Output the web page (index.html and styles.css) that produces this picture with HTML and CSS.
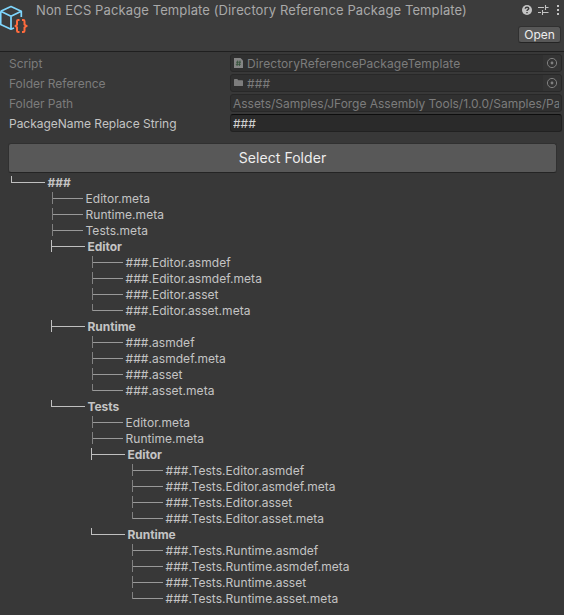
FILE: index.html
```html
<!DOCTYPE html>
<html lang="en">
<head>
<meta charset="utf-8">
<title>Inspector</title>
<link rel="stylesheet" href="styles.css">
</head>
<body>
<header class="header">
  <svg class="asset-icon" width="30" height="36" viewBox="0 0 30 36" fill="none">
    <path d="M0.7 11.3 11 6.6 21.3 11.3V17M0.7 11.3V24.5L11 29.2 14 28M0.7 11.3 11 16.3 21.3 11.3M11 16.3V29" stroke="#7fd6fd" stroke-width="1.7" stroke-linejoin="round"/>
    <path d="M19.5 20H18.2Q17 20 17 21.2V24.6L15.6 26 17 27.4V30.8Q17 32 18.2 32H19.5M22 20H23.3Q24.5 20 24.5 21.2V24.6L26.4 26 24.5 27.4V30.8Q24.5 32 23.3 32H22" stroke="#ff6b3d" stroke-width="2"/>
  </svg>
  <h1 class="title">Non ECS Package Template (Directory Reference Package Template)</h1>
  <div class="actions">
    <div class="tools">
      <svg width="10" height="10" viewBox="0 0 10 10"><circle cx="5" cy="5" r="5" fill="#c4c4c4"/><path d="M3.2 3.8Q3.3 2.2 5 2.2T6.8 3.6Q6.8 4.4 5.7 4.9 5 5.2 5 6.1M5 7V8.3" fill="none" stroke="#3c3c3c" stroke-width="1.4"/></svg>
      <svg width="11" height="10" viewBox="0 0 11 10" fill="none" stroke="#c4c4c4" stroke-width="1.1"><path d="M0 2.5H6M7.5 2.5H10.5M7.5 0V5M0 7.5H3M4.5 7.5H10.5M4.5 5V10"/></svg>
      <svg width="4" height="10" viewBox="0 0 4 10" fill="#c4c4c4"><path d="M1 0h2v2H1zM1 4h2v2H1zM1 8h2v2H1z"/></svg>
    </div>
    <button class="open">Open</button>
  </div>
</header>
<main>
  <section class="fields">
    <div class="row disabled"><label>Script</label><div class="field">
      <svg class="kind" width="9" height="10" viewBox="0 0 9 10"><path d="M0 0H6.5L9 2.5V10H0z" fill="#858585"/><path d="M3.7 2.5 3 8M6 2.5 5.3 8M2 4.2H7M1.8 6.3H6.8" stroke="#35523b" stroke-width=".9"/></svg>
      <span class="value object">DirectoryReferencePackageTemplate</span>
      <span class="picker"><svg width="12" height="12" viewBox="0 0 12 12"><circle cx="6" cy="6" r="4.6" fill="none" stroke="#808080"/><circle cx="6" cy="6" r="1.4" fill="#808080"/></svg></span></div></div>
    <div class="row disabled"><label>Folder Reference</label><div class="field">
      <svg class="kind" width="9" height="10" viewBox="0 0 9 10"><path d="M0 1.7Q0 1 .7 1H3.3L4.3 2.2H8.3Q9 2.2 9 2.9V7.4Q9 8.1 8.3 8.1H.7Q0 8.1 0 7.4z" fill="#7d7d7d"/></svg>
      <span class="value object">###</span>
      <span class="picker"><svg width="12" height="12" viewBox="0 0 12 12"><circle cx="6" cy="6" r="4.6" fill="none" stroke="#808080"/><circle cx="6" cy="6" r="1.4" fill="#808080"/></svg></span></div></div>
    <div class="row disabled"><label>Folder Path</label><div class="field text"><span class="value">Assets/Samples/JForge Assembly Tools/1.0.0/Samples/Pa</span></div></div>
    <div class="row"><label>PackageName Replace String</label><div class="field text active"><span class="value">###</span></div></div>
  </section>
  <button class="select">Select Folder</button>
  <ul class="tree">
    <li><div class="dir last">###</div>
      <ul>
        <li class="file">Editor.meta</li>
        <li class="file">Runtime.meta</li>
        <li class="file">Tests.meta</li>
        <li><div class="dir">Editor</div>
          <ul>
            <li class="file">###.Editor.asmdef</li>
            <li class="file">###.Editor.asmdef.meta</li>
            <li class="file">###.Editor.asset</li>
            <li class="file last">###.Editor.asset.meta</li>
          </ul>
        </li>
        <li><div class="dir">Runtime</div>
          <ul>
            <li class="file">###.asmdef</li>
            <li class="file">###.asmdef.meta</li>
            <li class="file">###.asset</li>
            <li class="file last">###.asset.meta</li>
          </ul>
        </li>
        <li><div class="dir last">Tests</div>
          <ul>
            <li class="file">Editor.meta</li>
            <li class="file">Runtime.meta</li>
            <li><div class="dir">Editor</div>
              <ul>
                <li class="file">###.Tests.Editor.asmdef</li>
                <li class="file">###.Tests.Editor.asmdef.meta</li>
                <li class="file">###.Tests.Editor.asset</li>
                <li class="file last">###.Tests.Editor.asset.meta</li>
              </ul>
            </li>
            <li><div class="dir last">Runtime</div>
              <ul>
                <li class="file">###.Tests.Runtime.asmdef</li>
                <li class="file">###.Tests.Runtime.asmdef.meta</li>
                <li class="file">###.Tests.Runtime.asset</li>
                <li class="file last">###.Tests.Runtime.asset.meta</li>
              </ul>
            </li>
          </ul>
        </li>
      </ul>
    </li>
  </ul>
</main>
</body>
</html>
```

FILE: styles.css
```css
* { box-sizing: border-box; }
body {
  margin: 0;
  height: 615px;
  overflow: hidden;
  background: #383838;
  color: #c4c4c4;
  font: 12px/16px Inter, "Liberation Sans", sans-serif;
  letter-spacing: -.02px;
}
button { font: inherit; letter-spacing: inherit; color: #eee; padding: 0; }
.header {
  display: flex;
  height: 52px;
  background: #3c3c3c;
  border-bottom: 1px solid #1f1f1f;
}
.asset-icon { flex: none; }
.title {
  flex: 1;
  margin: 0;
  padding: 2px 0 0 6px;
  font-size: 13px;
  line-height: 17px;
  font-weight: 400;
  letter-spacing: .11px;
  white-space: nowrap;
  color: #a9a9a9;
}
.actions {
  display: flex;
  flex-direction: column;
  align-items: flex-end;
  padding: 5px 4px 0 0;
  gap: 11px;
}
.tools { display: flex; gap: 6px; height: 10px; }
.tools svg:nth-child(2) { margin-right: 1px; }
.open {
  width: 43px;
  height: 17px;
  margin-right: -1px;
  background: #585858;
  border: 1px solid #303030;
  border-bottom-color: #242424;
  border-radius: 3px;
  line-height: 14px;
}
.fields {
  display: flex;
  flex-direction: column;
  gap: 2px;
  padding: 2px 2px 0 9px;
}
.row { display: flex; height: 18px; }
.row label { width: 221px; line-height: 19px; }
.disabled { color: #7c7c7c; }
.field {
  display: flex;
  align-items: center;
  width: 332px;
  min-width: 0;
  background: #303030;
  border: 1px solid #282828;
  border-radius: 3px;
  padding-left: 3px;
  overflow: hidden;
}
.kind { flex: none; margin-right: 4px; }
.value { flex: 1; white-space: nowrap; overflow: hidden; line-height: 16px; padding-top: 1px; }
.object { letter-spacing: .09px; }
.text { padding: 0 2px; }
.active { background: #2a2a2a; border-color: #212121; border-top-color: #0d0d0d; }
.active .value { color: #d2d2d2; }
.picker {
  display: flex;
  align-items: center;
  justify-content: center;
  width: 18px;
  height: 16px;
  background: #343434;
}
.select {
  display: block;
  width: 549px;
  height: 30px;
  margin: 11px 0 0 8px;
  background: #585858;
  border: 1px solid #303030;
  border-bottom-color: #242424;
  border-radius: 3px;
  font-size: 14px;
  letter-spacing: .06px;
}
.tree, .tree ul { list-style: none; margin: 0; padding: 0; }
.tree { padding: 2px 0 0 11px; }
.tree ul { padding-left: 40px; }
.dir, .file { display: flex; height: 16px; line-height: 16px; white-space: nowrap; }
.dir { font-weight: 700; gap: 2.5px; letter-spacing: -.05px; }
.file { padding-left: 1px; gap: 2.5px; letter-spacing: .05px; }
.dir::before, .file::before {
  content: "";
  flex: none;
  width: 33px;
  height: 12px;
  margin-top: 1px;
  border-left: 1px solid #c0c0c0;
  background: linear-gradient(#c0c0c0, #c0c0c0) 0 6px / 100% 1px no-repeat;
}
.file::before {
  width: 30px;
  border-left-color: #808080;
  background-image: linear-gradient(#999, #999);
}
.dir.last::before, .file.last::before { height: 7px; }
```
